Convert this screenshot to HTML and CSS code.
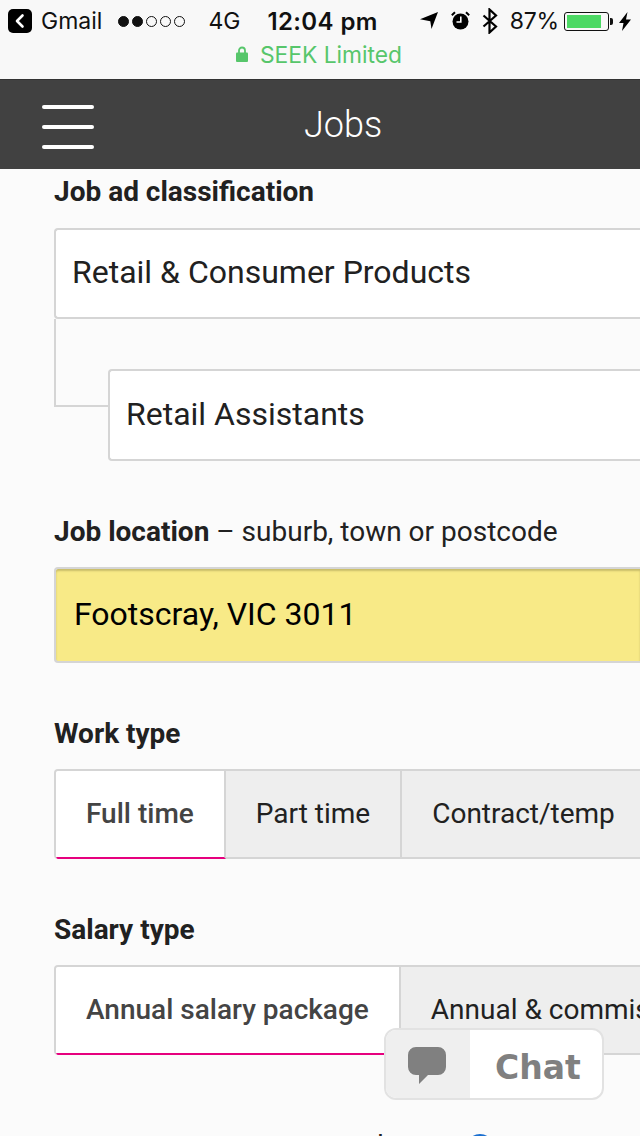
FILE: index.html
```html
<!DOCTYPE html>
<html lang="en">
<head>
  <meta charset="UTF-8">
  <meta name="viewport" content="width=device-width, initial-scale=1.0">
  <title>Jobs</title>
  <link rel="stylesheet" href="styles.css">
</head>
<body>
  <!-- iOS status bar and address line -->
  <div class="browser-bar">
    <div class="status-row">
      <div class="status-left">
        <svg class="back-icon" width="24" height="24" viewBox="0 0 24 24"><rect width="24" height="24" rx="5" fill="#000"/><path d="M14.500 6.500 9 12l5.500 5.500" fill="none" stroke="#fff" stroke-width="2.600" stroke-linecap="round" stroke-linejoin="round"/></svg>
        <span class="app-name">Gmail</span>
        <span class="signal"><i class="on"></i><i class="on"></i><i></i><i></i><i></i></span>
        <span class="network">4G</span>
      </div>
      <div class="clock">12:04 pm</div>
      <div class="status-right">
        <svg class="icon-arrow" width="18" height="17" viewBox="0 0 18 17"><path d="M18 0 11.500 17l-1.200-7.800L0 7.200z" fill="#000"/></svg>
        <svg class="icon-alarm" width="19" height="19" viewBox="0 0 19 19"><circle cx="9.500" cy="10.500" r="8" fill="#000"/><path d="M9.800 5.500V11H5.500" fill="none" stroke="#fff" stroke-width="1.600"/><path d="M.8 4.200 4 1.200M18.200 4.200 15 1.200" stroke="#000" stroke-width="2" fill="none"/></svg>
        <svg class="icon-bt" width="16" height="26" viewBox="0 0 16 26"><path d="M1.500 7.500 14 18.500 7.500 24.500V1.500L14 7.500 1.500 18.500" fill="none" stroke="#000" stroke-width="2.200"/></svg>
        <span class="battery-pct">87%</span>
        <span class="battery"><span class="battery-fill" style="width: 87%"></span></span>
        <svg class="icon-bolt" width="12" height="19" viewBox="0 0 12 19"><path d="M8.500 0 0 11h4.500L3 19l9-11.500H7z" fill="#000"/></svg>
      </div>
    </div>
    <div class="site-row">
      <svg width="12" height="16" viewBox="0 0 12 16"><path d="M3 7V4.500a3 3 0 0 1 6 0V7" fill="none" stroke="#57c66b" stroke-width="1.800"/><rect y="6.500" width="12" height="9.500" rx="1" fill="#57c66b"/></svg>
      <span>SEEK Limited</span>
    </div>
  </div>

  <header class="top-nav">
    <div class="hamburger"><span></span><span></span><span></span></div>
    <div class="nav-title">Jobs</div>
  </header>

  <main class="form">
    <div class="label first-label">Job ad classification</div>
    <div class="field">Retail &amp; Consumer Products</div>
    <div class="sub-wrap">
      <div class="connector"></div>
      <div class="field sub-field">Retail Assistants</div>
    </div>

    <div class="label location-label"><b>Job location</b> – suburb, town or postcode</div>
    <div class="field filled">Footscray, VIC 3011</div>

    <div class="label type-label">Work type</div>
    <div class="tabs">
      <div class="tab active">Full time</div>
      <div class="tab">Part time</div>
      <div class="tab">Contract/temp</div>
    </div>

    <div class="label salary-label">Salary type</div>
    <div class="tabs">
      <div class="tab active">Annual salary package</div>
      <div class="tab">Annual &amp; commission</div>
    </div>

    <div class="cut-line">
      <span class="cut-text">the rate</span>
      <span class="help-dot"></span>
    </div>
  </main>

  <!-- floating chat button -->
  <div class="chat">
    <div class="chat-icon">
      <svg width="38" height="37" viewBox="0 0 38 37"><path d="M8 0h22a8 8 0 0 1 8 8v12a8 8 0 0 1-8 8H20l-9 9v-9H8a8 8 0 0 1-8-8V8a8 8 0 0 1 8-8z" fill="#808080"/></svg>
    </div>
    <div class="chat-label">Chat</div>
  </div>
</body>
</html>
```

FILE: styles.css
```css
html, body {
  margin: 0;
  padding: 0;
}

body {
  width: 640px;
  height: 1136px;
  overflow: hidden;
  position: relative;
  font-family: Roboto, Arial, sans-serif;
  color: #212121;
  background-color: #fbfbfb;
}

/* status bar */
.browser-bar {
  height: 79px;
  background-color: #f8f8f8;
  border-bottom: 1px solid #333;
  box-sizing: content-box;
  font-family: Inter, "Liberation Sans", sans-serif;
}

.status-row {
  height: 42px;
  display: flex;
  align-items: center;
  padding: 0 9px 0 8px;
  position: relative;
  color: #111;
}

.status-left {
  display: flex;
  align-items: center;
}

.app-name {
  font-size: 23px;
  margin-left: 9px;
}

.signal {
  display: flex;
  gap: 3px;
  margin-left: 16px;
}

.signal i {
  width: 11px;
  height: 11px;
  box-sizing: border-box;
  border: 1px solid #111;
  border-radius: 50%;
}

.signal i.on {
  background-color: #111;
}

.network {
  font-size: 23px;
  margin-left: 23px;
}

.clock {
  font-size: 24px;
  font-weight: 600;
  letter-spacing: 0.4px;
  margin-left: 27px;
}

.status-right {
  display: flex;
  align-items: center;
  margin-left: auto;
}

.icon-arrow {
  margin-right: 13px;
  margin-top: -1px;
}

.icon-alarm {
  margin-right: 12px;
  margin-top: -2px;
}

.icon-bt {
  margin-right: 12px;
}

.battery-pct {
  font-size: 23px;
  letter-spacing: -0.2px;
  margin-right: 5px;
}

.battery {
  width: 45px;
  height: 19px;
  box-sizing: border-box;
  border: 1px solid #111;
  border-radius: 3px;
  padding: 2px;
  margin-right: 10px;
  position: relative;
  display: block;
}

.battery::after {
  content: "";
  position: absolute;
  right: -5px;
  top: 5px;
  width: 3px;
  height: 7px;
  background-color: #111;
  border-radius: 0 2px 2px 0;
}

.battery-fill {
  display: block;
  height: 100%;
  background-color: #4cd964;
}

.site-row {
  height: 26px;
  margin-top: -1px;
  display: flex;
  justify-content: center;
  align-items: center;
  gap: 12px;
  padding-right: 2px;
  font-size: 22.800px;
  color: #57c66b;
}

/* dark header */
.top-nav {
  height: 89px;
  background-color: #414141;
  display: flex;
  align-items: center;
  position: relative;
}

.hamburger {
  width: 52px;
  margin-left: 42px;
  padding-top: 4px;
  display: flex;
  flex-direction: column;
  gap: 16px;
}

.hamburger span {
  height: 4px;
  background-color: #fff;
  border-radius: 2px;
}

.nav-title {
  position: absolute;
  left: 304px;
  top: 24px;
  font-size: 36px;
  font-weight: 300;
  color: #fff;
}

/* form */
.form {
  padding-left: 54px;
}

.label {
  font-size: 28px;
  font-weight: 700;
  line-height: 34px;
}

.label b {
  font-weight: 700;
}

.first-label {
  padding-top: 6px;
}

.location-label {
  font-weight: 400;
  margin-top: 54px;
}

.type-label {
  margin-top: 54px;
}

.salary-label {
  margin-top: 54px;
}

.field {
  height: 91px;
  margin-top: 19px;
  box-sizing: border-box;
  border: 2px solid #d5d5d5;
  border-right: 0;
  border-radius: 4px 0 0 4px;
  background-color: #fff;
  padding-left: 16px;
  font-size: 32px;
  line-height: 84px;
}

.sub-wrap {
  display: flex;
  align-items: flex-start;
  position: relative;
}

.connector {
  width: 54px;
  height: 88px;
  flex-shrink: 0;
  box-sizing: border-box;
  border-left: 2px solid #d5d5d5;
  border-bottom: 2px solid #d5d5d5;
}

.sub-field {
  flex: 1;
  height: 92px;
  margin-top: 50px;
  line-height: 87px;
}

.filled {
  height: 96px;
  margin-top: 18px;
  background-color: #f8ea87;
  color: #000;
  padding-left: 18px;
  line-height: 90px;
  box-shadow: inset 0 2px 2px #c9bd6a;
}

.tabs {
  height: 90px;
  margin-top: 18px;
  display: flex;
  box-sizing: border-box;
  border: 2px solid #d5d5d5;
  border-right: 0;
  border-bottom: 0;
  border-radius: 4px 0 0 4px;
  background-color: #eeeeee;
  white-space: nowrap;
  overflow: hidden;
}

.tab {
  padding: 0 30px;
  font-size: 28px;
  line-height: 86px;
  box-sizing: border-box;
  border-right: 2px solid #d5d5d5;
  border-bottom: 2px solid #d5d5d5;
  flex-shrink: 0;
}

.tab.active {
  background-color: #fff;
  color: #444;
  font-weight: 500;
  border-bottom-color: #e6007e;
}

.cut-line {
  position: absolute;
  left: 368px;
  top: 1129px;
  display: flex;
  align-items: flex-start;
  font-size: 28px;
}

.help-dot {
  position: absolute;
  left: 98px;
  top: 5px;
  width: 28px;
  height: 28px;
  border-radius: 50%;
  background-color: #1a6fd0;
}

/* chat */
.chat {
  position: absolute;
  left: 384px;
  top: 1028px;
  width: 220px;
  height: 72px;
  box-sizing: border-box;
  border: 2px solid #e2e2e2;
  border-radius: 12px;
  background-color: #fff;
  display: flex;
  overflow: hidden;
}

.chat-icon {
  width: 84px;
  background-color: #efefef;
  display: flex;
  align-items: center;
  justify-content: center;
  padding: 2px 2px 0 0;
  box-sizing: border-box;
}

.chat-label {
  font-family: "DejaVu Sans", sans-serif;
  font-weight: 700;
  font-size: 33px;
  color: #808080;
  line-height: 75px;
  margin-left: 25px;
}
```
